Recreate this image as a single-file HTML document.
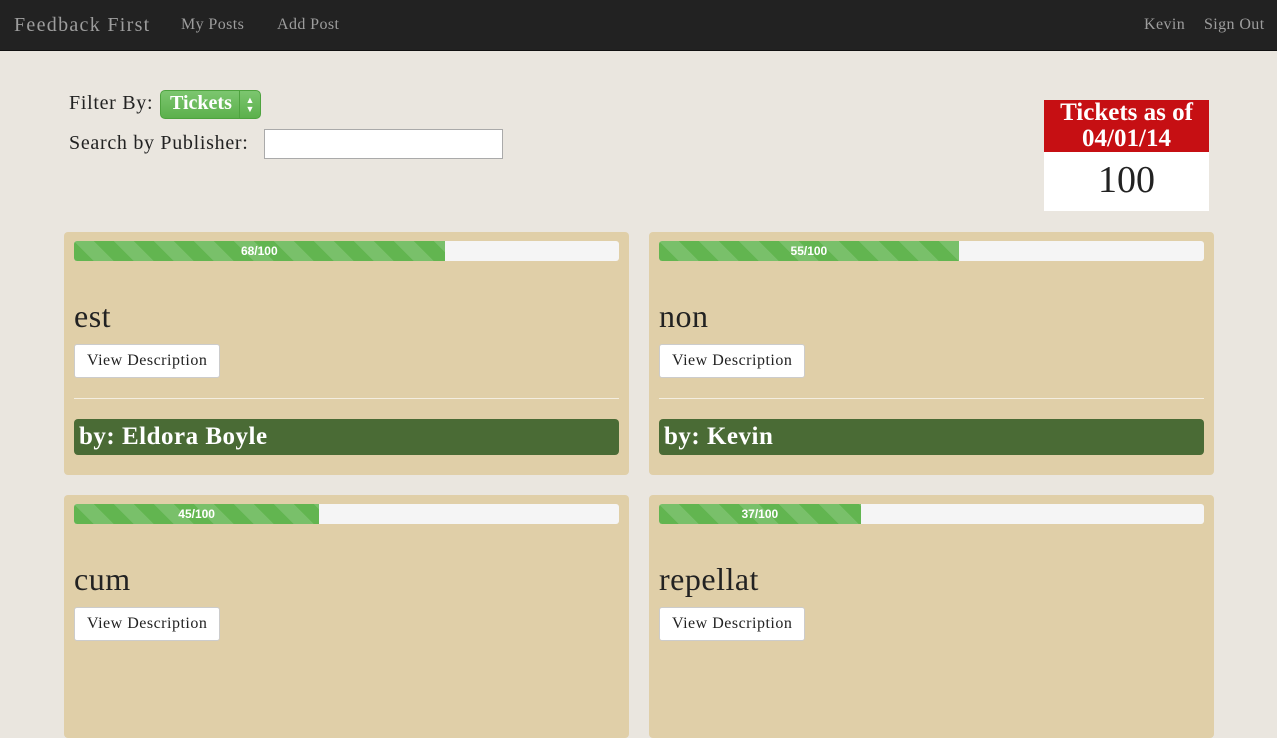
<!DOCTYPE html>
<html><head><style>
*{box-sizing:border-box;margin:0;padding:0}
body{width:1277px;height:629px;overflow:hidden;background:#eae6df;font-family:"Liberation Serif",serif;color:#222}
.nav{height:51px;background:#222;border-bottom:1px solid #111;position:relative}
.nav span{position:absolute;top:16px;color:#9d9d9d;font-size:16px;letter-spacing:.4px}
.brand{font-size:20px!important;top:14px!important;letter-spacing:1.3px!important}
.f{position:absolute;font-size:20px;letter-spacing:.7px}
.sel{position:absolute;left:160px;top:90px;width:101px;height:29px;border-radius:5px;background:linear-gradient(#7cc66f,#5cb04c);border:1px solid #4ea33f;color:#fff;font-size:20px;font-weight:bold;padding:1px 0 0 9px}
.sel i{position:absolute;right:0;top:0;width:21px;height:27px;border-left:1px solid #4ea33f;font-style:normal;font-size:9px;line-height:9px;text-align:center;padding-top:5px}
.inp{position:absolute;left:264px;top:129px;width:239px;height:30px;background:#fff;border:1px solid #aaa}
.tk{position:absolute;left:1044px;top:100px;width:165px;height:111px;background:#fff;text-align:center}
.tk .h{background:#c60f13;color:#fff;font-weight:bold;font-size:25px;line-height:26px;height:52px}
.tk .n{font-size:38px;padding-top:6px}
.card{position:absolute;width:565px;height:243px;background:#e0cfa8;border-radius:4px;padding:9px 10px}
.bar{height:20px;background:#f5f5f5;border-radius:3px;overflow:hidden;position:relative}
.bar div{height:100%;background-color:#62b550;background-image:linear-gradient(45deg,rgba(255,255,255,.15) 25%,transparent 25%,transparent 50%,rgba(255,255,255,.15) 50%,rgba(255,255,255,.15) 75%,transparent 75%);background-size:40px 40px;color:#fff;font:bold 12px "Liberation Sans",sans-serif;text-align:center;line-height:20px}
.t{font-size:32px;margin-top:37px;height:36px;letter-spacing:.5px}
.btn{display:inline-block;margin-top:10px;background:#fff;border:1px solid #ccc;border-radius:3px;padding:7px 12px;font-size:16px;letter-spacing:.5px;height:34px}
hr{border:0;border-top:1px solid #f4eee0;margin:20px 0 20px}
.by{background:#4a6b35;color:#fff;font-weight:bold;font-size:25px;border-radius:4px;height:36px;padding:4px 5px 0;letter-spacing:.5px}
</style></head><body>
<div class="nav"><span class="brand" style="left:14px">Feedback First</span><span style="left:181px">My Posts</span><span style="left:277px">Add Post</span><span style="left:1144px">Kevin</span><span style="left:1204px">Sign Out</span></div>
<div class="f" style="left:69px;top:92px">Filter By:</div>
<div class="sel">Tickets<i>▲<br>▼</i></div>
<div class="f" style="left:69px;top:132px">Search by Publisher:</div>
<div class="inp"></div>
<div class="tk"><div class="h">Tickets as of<br>04/01/14</div><div class="n">100</div></div>
<div class="card" style="left:64px;top:232px"><div class="bar"><div style="width:68%">68/100</div></div><div class="t">est</div><div class="btn">View Description</div><hr><div class="by">by: Eldora Boyle</div></div>
<div class="card" style="left:649px;top:232px"><div class="bar"><div style="width:55%">55/100</div></div><div class="t">non</div><div class="btn">View Description</div><hr><div class="by">by: Kevin</div></div>
<div class="card" style="left:64px;top:495px"><div class="bar"><div style="width:45%">45/100</div></div><div class="t">cum</div><div class="btn">View Description</div></div>
<div class="card" style="left:649px;top:495px"><div class="bar"><div style="width:37%">37/100</div></div><div class="t">repellat</div><div class="btn">View Description</div></div>
</body></html>
